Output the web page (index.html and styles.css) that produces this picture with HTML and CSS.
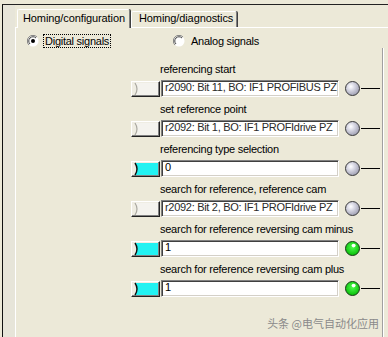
FILE: index.html
```html
<!DOCTYPE html>
<html lang="en">
<head>
  <meta charset="UTF-8" />
  <title>Homing</title>
  <link rel="stylesheet" href="styles.css">
</head>
<body>

  <svg class="defs" width="0" height="0">
    <defs>
      <radialGradient id="ledGray" cx="0.38" cy="0.36" r="0.7">
        <stop offset="0" stop-color="#ffffff"/>
        <stop offset="0.3" stop-color="#e0e0ea"/>
        <stop offset="1" stop-color="#9a9aae"/>
      </radialGradient>
      <radialGradient id="ledGreen" cx="0.5" cy="0.4" r="0.65">
        <stop offset="0" stop-color="#50ff50"/>
        <stop offset="1" stop-color="#00b400"/>
      </radialGradient>
    </defs>
  </svg>

  <div class="window">
    <div class="tabbar">
      <div class="tab active">Homing/configuration</div>
      <div class="tab">Homing/diagnostics</div>
    </div>

    <div class="panel">
      <div class="signals">

        <div class="mode">
          <label class="radio first">
            <svg width="12" height="12" viewBox="0 0 12 12">
              <circle cx="6" cy="6" r="5.5" fill="#fff"/>
              <path d="M10 2 A5.5 5.5 0 0 0 2 10" stroke="#808080" fill="none"/>
              <path d="M9 3 A4.2 4.2 0 0 0 3 9" stroke="#404040" fill="none"/>
              <circle cx="6" cy="6" r="2" fill="#000"/>
            </svg>
            <span class="focus">Digital signals</span>
          </label>
          <label class="radio">
            <svg width="12" height="12" viewBox="0 0 12 12">
              <circle cx="6" cy="6" r="5.5" fill="#fff"/>
              <path d="M10 2 A5.5 5.5 0 0 0 2 10" stroke="#808080" fill="none"/>
              <path d="M9 3 A4.2 4.2 0 0 0 3 9" stroke="#404040" fill="none"/>
            </svg>
            <span>Analog signals</span>
          </label>
        </div>

        <div class="sig">
          <div class="sig-label">referencing start</div>
          <div class="sig-row">
            <span class="btn"><svg width="27" height="14" viewBox="0 0 27 14"><path class="plug" d="M3 1 H26 V13 H3 Q7 7 3 1 Z"/><path class="arc" d="M3 1 Q7 7 3 13"/></svg></span>
            <span class="field linked">r2090: Bit 11, BO: IF1 PROFIBUS PZ</span>
            <svg class="led" width="15" height="15" viewBox="0 0 15 15"><circle cx="7.5" cy="7.5" r="7" fill="url(#ledGray)" stroke="#3a3a3a"/></svg>
            <span class="wire"></span>
          </div>
        </div>

        <div class="sig">
          <div class="sig-label">set reference point</div>
          <div class="sig-row">
            <span class="btn"><svg width="27" height="14" viewBox="0 0 27 14"><path class="plug" d="M3 1 H26 V13 H3 Q7 7 3 1 Z"/><path class="arc" d="M3 1 Q7 7 3 13"/></svg></span>
            <span class="field linked">r2092: Bit 1, BO: IF1 PROFIdrive PZ</span>
            <svg class="led" width="15" height="15" viewBox="0 0 15 15"><circle cx="7.5" cy="7.5" r="7" fill="url(#ledGray)" stroke="#3a3a3a"/></svg>
            <span class="wire"></span>
          </div>
        </div>

        <div class="sig">
          <div class="sig-label">referencing type selection</div>
          <div class="sig-row">
            <span class="btn on"><svg width="27" height="14" viewBox="0 0 27 14"><path class="plug" d="M3 1 H26 V13 H3 Q7 7 3 1 Z"/><path class="arc" d="M3 1 Q7 7 3 13"/></svg></span>
            <span class="field">0</span>
            <svg class="led" width="15" height="15" viewBox="0 0 15 15"><circle cx="7.5" cy="7.5" r="7" fill="url(#ledGray)" stroke="#3a3a3a"/></svg>
            <span class="wire"></span>
          </div>
        </div>

        <div class="sig">
          <div class="sig-label">search for reference, reference cam</div>
          <div class="sig-row">
            <span class="btn"><svg width="27" height="14" viewBox="0 0 27 14"><path class="plug" d="M3 1 H26 V13 H3 Q7 7 3 1 Z"/><path class="arc" d="M3 1 Q7 7 3 13"/></svg></span>
            <span class="field linked">r2092: Bit 2, BO: IF1 PROFIdrive PZ</span>
            <svg class="led" width="15" height="15" viewBox="0 0 15 15"><circle cx="7.5" cy="7.5" r="7" fill="url(#ledGray)" stroke="#3a3a3a"/></svg>
            <span class="wire"></span>
          </div>
        </div>

        <div class="sig">
          <div class="sig-label">search for reference reversing cam minus</div>
          <div class="sig-row">
            <span class="btn on"><svg width="27" height="14" viewBox="0 0 27 14"><path class="plug" d="M3 1 H26 V13 H3 Q7 7 3 1 Z"/><path class="arc" d="M3 1 Q7 7 3 13"/></svg></span>
            <span class="field">1</span>
            <svg class="led" width="15" height="15" viewBox="0 0 15 15"><circle cx="7.5" cy="7.5" r="7" fill="url(#ledGreen)" stroke="#1a3a1a"/><ellipse cx="8.6" cy="4.6" rx="2" ry="1.8" fill="#fff"/></svg>
            <span class="wire"></span>
          </div>
        </div>

        <div class="sig">
          <div class="sig-label">search for reference reversing cam plus</div>
          <div class="sig-row">
            <span class="btn on"><svg width="27" height="14" viewBox="0 0 27 14"><path class="plug" d="M3 1 H26 V13 H3 Q7 7 3 1 Z"/><path class="arc" d="M3 1 Q7 7 3 13"/></svg></span>
            <span class="field">1</span>
            <svg class="led" width="15" height="15" viewBox="0 0 15 15"><circle cx="7.5" cy="7.5" r="7" fill="url(#ledGreen)" stroke="#1a3a1a"/><ellipse cx="8.6" cy="4.6" rx="2" ry="1.8" fill="#fff"/></svg>
            <span class="wire"></span>
          </div>
        </div>

      </div>
      <div class="side"></div>
    </div>
  </div>

  <div class="watermark">头条 @电气自动化应用</div>

</body>
</html>
```

FILE: styles.css
```css
:root {
  --face: #ECE9D8;
  --strip: #E7E5D9;
  --shadow: #808080;
  --dark: #404040;
  --cyan: #22F2F2;
  --font-main: 'Liberation Sans', Arial, sans-serif;
}

html, body {
  margin: 0;
  height: 100%;
}

body {
  background: var(--face);
  font-family: var(--font-main);
  font-size: 11px;
  color: #000;
  overflow: hidden;
  position: relative;
}

.defs {
  position: absolute;
}

/* fenêtre */
.window {
  box-sizing: border-box;
  height: calc(100% - 4px);
  margin: 4px 0 0 2px;
  padding-left: 12px;
  border-top: 1px solid #222;
  border-left: 1px solid #111;
  background: var(--strip);
  display: flex;
  flex-direction: column;
}

.tabbar {
  height: 22px;
  display: flex;
  align-items: flex-end;
  background: var(--face);
}

.tab {
  box-sizing: border-box;
  width: 106px;
  height: 16px;
  line-height: 13px;
  padding-left: 7px;
  white-space: nowrap;
  letter-spacing: -0.1px;
  background: var(--face);
  border-top: 1px solid #fff;
  border-left: 1px solid #fff;
  border-right: 1px solid var(--shadow);
  box-shadow: 1px 0 0 var(--dark);
  border-radius: 2px 2px 0 0;
}

.tab.active {
  width: 113px;
  height: 19px;
  margin-left: 2px;
  margin-right: 1px;
  margin-bottom: -1px;
  padding-top: 2px;
  padding-left: 5px;
  position: relative;
  z-index: 1;
}

.panel {
  flex: 1;
  display: flex;
  background: var(--face);
  border-top: 1px solid #fff;
  border-left: 1px solid #fff;
}

.signals {
  width: 366px;
}

/* boutons radio */
.mode {
  display: flex;
  align-items: center;
  height: 14px;
  margin-top: 6px;
  padding-left: 11px;
}

.radio {
  display: flex;
  align-items: center;
  gap: 4px;
}

.radio.first {
  width: 146px;
}

.radio span {
  line-height: 12px;
  padding: 0 1px;
  letter-spacing: -0.25px;
  border: 1px solid transparent;
}

.radio .focus {
  border: 1px dotted #000;
}

/* signaux */
.sig {
  margin-top: 15px;
  margin-left: 115px;
}

.sig + .sig {
  margin-top: 6px;
}

.sig-label {
  line-height: 13px;
  padding-left: 29px;
  white-space: nowrap;
  letter-spacing: -0.25px;
}

.sig-row {
  display: flex;
  align-items: center;
  height: 17px;
  margin-top: 4px;
}

.btn {
  box-sizing: border-box;
  width: 29px;
  height: 16px;
  background: #EFEDE3;
  border: 1px solid;
  border-color: #fff #222 #222 #fff;
  box-shadow: inset -1px -1px 0 var(--shadow);
  display: flex;
}

.plug {
  fill: #F4F3EE;
  stroke: none;
}

.arc {
  fill: none;
  stroke: #A9A8A0;
  stroke-width: 1.2;
}

.btn.on .plug {
  fill: var(--cyan);
}

.btn.on .arc {
  stroke: #111;
  stroke-width: 1.4;
}

.field {
  box-sizing: border-box;
  width: 178px;
  height: 17px;
  margin-left: 1px;
  padding-left: 3px;
  line-height: 13px;
  background: #fff;
  border: 1px solid;
  border-color: var(--shadow) #fff #fff var(--shadow);
  box-shadow: inset 1px 1px 0 var(--dark), inset -1px -1px 0 #D4D0C8;
  white-space: nowrap;
  overflow: hidden;
}

.field.linked {
  color: #2a2a2a;
  letter-spacing: -0.3px;
}

.led {
  margin-left: 6px;
  flex: none;
}

.wire {
  width: 19px;
  height: 1px;
  margin-left: 1px;
  background: #000;
}

.side {
  flex: 1;
  margin-top: 20px;
  border-left: 1px solid #A0A0A0;
  box-shadow: inset 1px 0 0 #fff;
}

.watermark {
  position: absolute;
  top: 315px;
  right: 9px;
  font-family: 'Noto Sans CJK SC', sans-serif;
  font-size: 11px;
  color: #8a8a8a;
}
```
